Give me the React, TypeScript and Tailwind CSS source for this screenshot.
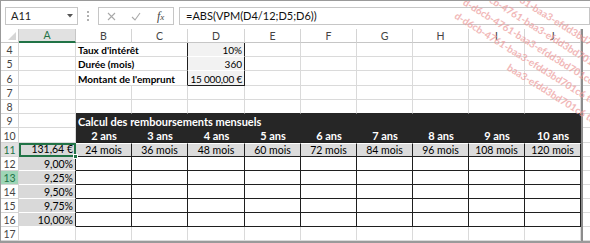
import React from "react";

const COLS = ["A", "B", "C", "D", "E", "F", "G", "H", "I", "J"];
const W: Record<string, string> = {
  A: "w-[57px]",
  B: "w-[56px]",
  C: "w-[56px]",
  D: "w-[57px]",
  E: "w-[56px]",
  F: "w-[56px]",
  G: "w-[56px]",
  H: "w-[56px]",
  I: "w-[56px]",
  J: "w-[56px]",
};

const LIGHT = "border-r border-b border-[#dadada]";
const DARK = "border-r border-b border-[#1f1f1f]";

function Row({ h, children }: { h: string; children: React.ReactNode }) {
  return (
    <div className={`flex ${h}`}>
      {children}
      <div className="w-[2px] shrink-0 bg-[#8c8c8c]" />
      <div className="w-[7px] shrink-0 border-b border-[#dadada]" />
    </div>
  );
}

function RowHead({ n, cls = "" }: { n: number; cls?: string }) {
  return (
    <div
      className={`w-[18px] shrink-0 flex items-end justify-center border-r border-b border-[#d4d4d4] leading-[12px] ${
        cls || "text-[#444]"
      }`}
    >
      {n}
    </div>
  );
}

function Cell({
  col,
  cls = LIGHT,
  align = "left",
  children,
}: {
  col: string;
  cls?: string;
  align?: "left" | "right" | "center";
  children?: React.ReactNode;
}) {
  const a =
    align === "right"
      ? "justify-end pr-[2px]"
      : align === "center"
      ? "justify-center"
      : "justify-start pl-[2px]";
  return (
    <div className={`${W[col]} shrink-0 flex items-end leading-[12px] whitespace-nowrap ${a} ${cls}`}>
      {children}
    </div>
  );
}

function Blank({ from, to, cls = LIGHT }: { from: number; to: number; cls?: string }) {
  return (
    <>
      {COLS.slice(from, to + 1).map((c) => (
        <Cell key={c} col={c} cls={cls} />
      ))}
    </>
  );
}

const WM = "d-d6cb-4761-baa3-efdd3bd701c6 test v2_8";

function Label({ children }: { children: React.ReactNode }) {
  return (
    <div className="w-[112px] shrink-0 flex items-end pl-[2px] leading-[12px] font-bold text-[10px] border-b border-[#dadada] border-r border-r-[#1f1f1f]">
      {children}
    </div>
  );
}

export default function App() {
  const years = [2, 3, 4, 5, 6, 7, 8, 9, 10];
  const rates = ["9,00%", "9,25%", "9,50%", "9,75%", "10,00%"];
  return (
    <div className="relative w-[590px] h-[243px] overflow-hidden bg-white border-l border-t border-b-2 border-[#9a9a9a] font-['Lato',sans-serif] text-[10.5px] text-black">
      {/* formula bar */}
      <div className="flex h-[28px] pt-[6px] pb-[4px] pl-[4px]">
        <div className="w-[73px] h-[18px] border border-[#c6c6c6] flex items-center justify-between pl-[5px] pr-[4px] text-[11px] text-[#222]">
          <span>A11</span>
          <svg width="6" height="4" viewBox="0 0 6 4">
            <path d="M0 0 L6 0 L3 3.5 Z" fill="#555" />
          </svg>
        </div>
        <div className="w-[20px] flex flex-col items-center justify-center gap-[2px]">
          <div className="w-[2px] h-[2px] bg-[#b0b0b0]" />
          <div className="w-[2px] h-[2px] bg-[#b0b0b0]" />
          <div className="w-[2px] h-[2px] bg-[#b0b0b0]" />
        </div>
        <div className="w-[76px] h-[18px] border border-[#c6c6c6] flex items-center">
          <div className="w-[25px] flex justify-center">
            <svg width="9" height="9" viewBox="0 0 9 9">
              <path d="M1 1 L8 8 M8 1 L1 8" stroke="#a8a8a8" strokeWidth="1.1" />
            </svg>
          </div>
          <div className="w-[25px] flex justify-center">
            <svg width="10" height="9" viewBox="0 0 10 9">
              <path d="M1 5 L4 8 L9 1" stroke="#a8a8a8" strokeWidth="1.1" fill="none" />
            </svg>
          </div>
          <div className="w-[25px] flex justify-center items-center font-['Liberation_Serif',serif] italic text-[12px] text-[#444] leading-none">
            <span>f</span>
            <span className="text-[9px] translate-y-[1px]">x</span>
          </div>
        </div>
        <div className="flex-1 ml-[5px] h-[18px] border border-[#c6c6c6] flex items-center pl-[6px] text-[11px] text-[#111]">
          =ABS(VPM(D4/12;D5;D6))
        </div>
      </div>

      {/* column headers */}
      <div className="flex h-[14px] text-[#444]">
        <div className="relative w-[18px] shrink-0 border-r border-b border-[#c6c6c6]">
          <svg className="absolute right-[2px] bottom-[2px]" width="8" height="8" viewBox="0 0 8 8">
            <path d="M8 0 L8 8 L0 8 Z" fill="#d6d6d6" />
          </svg>
        </div>
        {COLS.map((c) =>
          c === "A" ? (
            <div
              key={c}
              className={`${W[c]} shrink-0 flex items-center justify-center bg-[#e1e1e1] text-[#217346] border-r border-[#c6c6c6] border-b-2 border-b-[#217346] leading-[12px]`}
            >
              {c}
            </div>
          ) : (
            <div
              key={c}
              className={`${W[c]} shrink-0 flex items-center justify-center border-r border-b border-[#d4d4d4] border-b-[#c6c6c6] leading-[12px]`}
            >
              {c}
            </div>
          )
        )}
        <div className="w-[2px] shrink-0 bg-[#8c8c8c]" />
        <div className="w-[7px] shrink-0 border-b border-[#c6c6c6]" />
      </div>

      {/* row 4 */}
      <Row h="h-[14px]">
        <RowHead n={4} />
        <Cell col="A" />
        <Label>Taux d'intérêt</Label>
        <Cell col="D" align="right" cls="text-[10px] bg-[#f2f2f2] border-r border-b border-r-[#1f1f1f] border-b-white">
          10%
        </Cell>
        <Blank from={4} to={9} />
      </Row>
      {/* row 5 */}
      <Row h="h-[14px]">
        <RowHead n={5} />
        <Cell col="A" />
        <Label>Durée (mois)</Label>
        <Cell col="D" align="right" cls="text-[10px] bg-[#f2f2f2] border-r border-b border-r-[#1f1f1f] border-b-white">
          360
        </Cell>
        <Blank from={4} to={9} />
      </Row>
      {/* row 6 */}
      <Row h="h-[15px]">
        <RowHead n={6} />
        <Cell col="A" />
        <Label>Montant de l'emprunt</Label>
        <Cell col="D" align="right" cls="text-[10px] tracking-[-0.2px] bg-[#f2f2f2] border-r border-b border-[#1f1f1f]">
          15 000,00 €
        </Cell>
        <Blank from={4} to={9} />
      </Row>
      {/* row 7 */}
      <Row h="h-[14px]">
        <RowHead n={7} />
        <Blank from={0} to={9} />
      </Row>
      {/* row 8 */}
      <Row h="h-[14px]">
        <RowHead n={8} />
        <Cell col="A" />
        <Blank from={1} to={9} cls="border-r border-b border-[#dadada] border-b-[#262626]" />
      </Row>
      {/* row 9 */}
      <Row h="h-[14px]">
        <RowHead n={9} />
        <Cell col="A" />
        <div className="w-[505px] shrink-0 flex items-end pl-[2px] leading-[12px] font-bold text-white bg-[#262626] text-[11px]">
          Calcul des remboursements mensuels
        </div>
      </Row>
      {/* row 10 */}
      <Row h="h-[15px]">
        <RowHead n={10} />
        <Cell col="A" />
        {COLS.slice(1).map((c, i) => (
          <Cell key={c} col={c} align="center" cls="bg-[#262626] text-white font-bold text-[11px] border-b border-[#1f1f1f]">
            {years[i]} ans
          </Cell>
        ))}
      </Row>
      {/* row 11 */}
      <Row h="h-[14px]">
        <RowHead n={11} cls="bg-[#e1e1e1] text-[#217346]" />
        <div className="relative w-[57px] shrink-0 flex items-end justify-end pr-[1px] leading-[11px] bg-[#d9d9d9] border-2 border-[#217346]">
          131,64 €
          <div className="absolute -right-[4px] -bottom-[4px] w-[5px] h-[5px] bg-[#217346] border border-white" />
        </div>
        {COLS.slice(1).map((c, i) => (
          <Cell key={c} col={c} align="center" cls={`bg-[#dcdcdc] ${DARK} border-t border-t-white`}>
            {years[i] * 12} mois
          </Cell>
        ))}
      </Row>
      {/* rows 12-16 */}
      {rates.map((r, k) => (
        <Row key={r} h="h-[14px]">
          <RowHead n={12 + k} cls={k === 1 ? "bg-[#9fd5b7] text-[#217346]" : ""} />
          <Cell col="A" align="right" cls="bg-[#d9d9d9] border-r border-b border-r-[#1f1f1f] border-b-white">
            {r}
          </Cell>
          <Blank from={1} to={9} cls={DARK} />
        </Row>
      ))}
      {/* row 17 */}
      <Row h="h-[14px]">
        <RowHead n={17} />
        <Blank from={0} to={9} />
      </Row>

      {/* watermark */}
      <div className="pointer-events-none absolute left-[457px] top-[10px] origin-top-left rotate-[32deg] font-bold text-[10px] leading-[16px] text-[#ec9a9a] opacity-70 whitespace-nowrap">
        <div className="-translate-y-[52px]">{WM}</div>
        <div className="-translate-y-[52px]">{WM}</div>
        <div className="-translate-y-[52px]">{WM}</div>
        <div className="-translate-y-[52px]">{WM}</div>
        <div className="-translate-y-[52px] translate-x-[72px]">baa3-efdd3bd701c6 test v2_8</div>
      </div>
    </div>
  );
}
